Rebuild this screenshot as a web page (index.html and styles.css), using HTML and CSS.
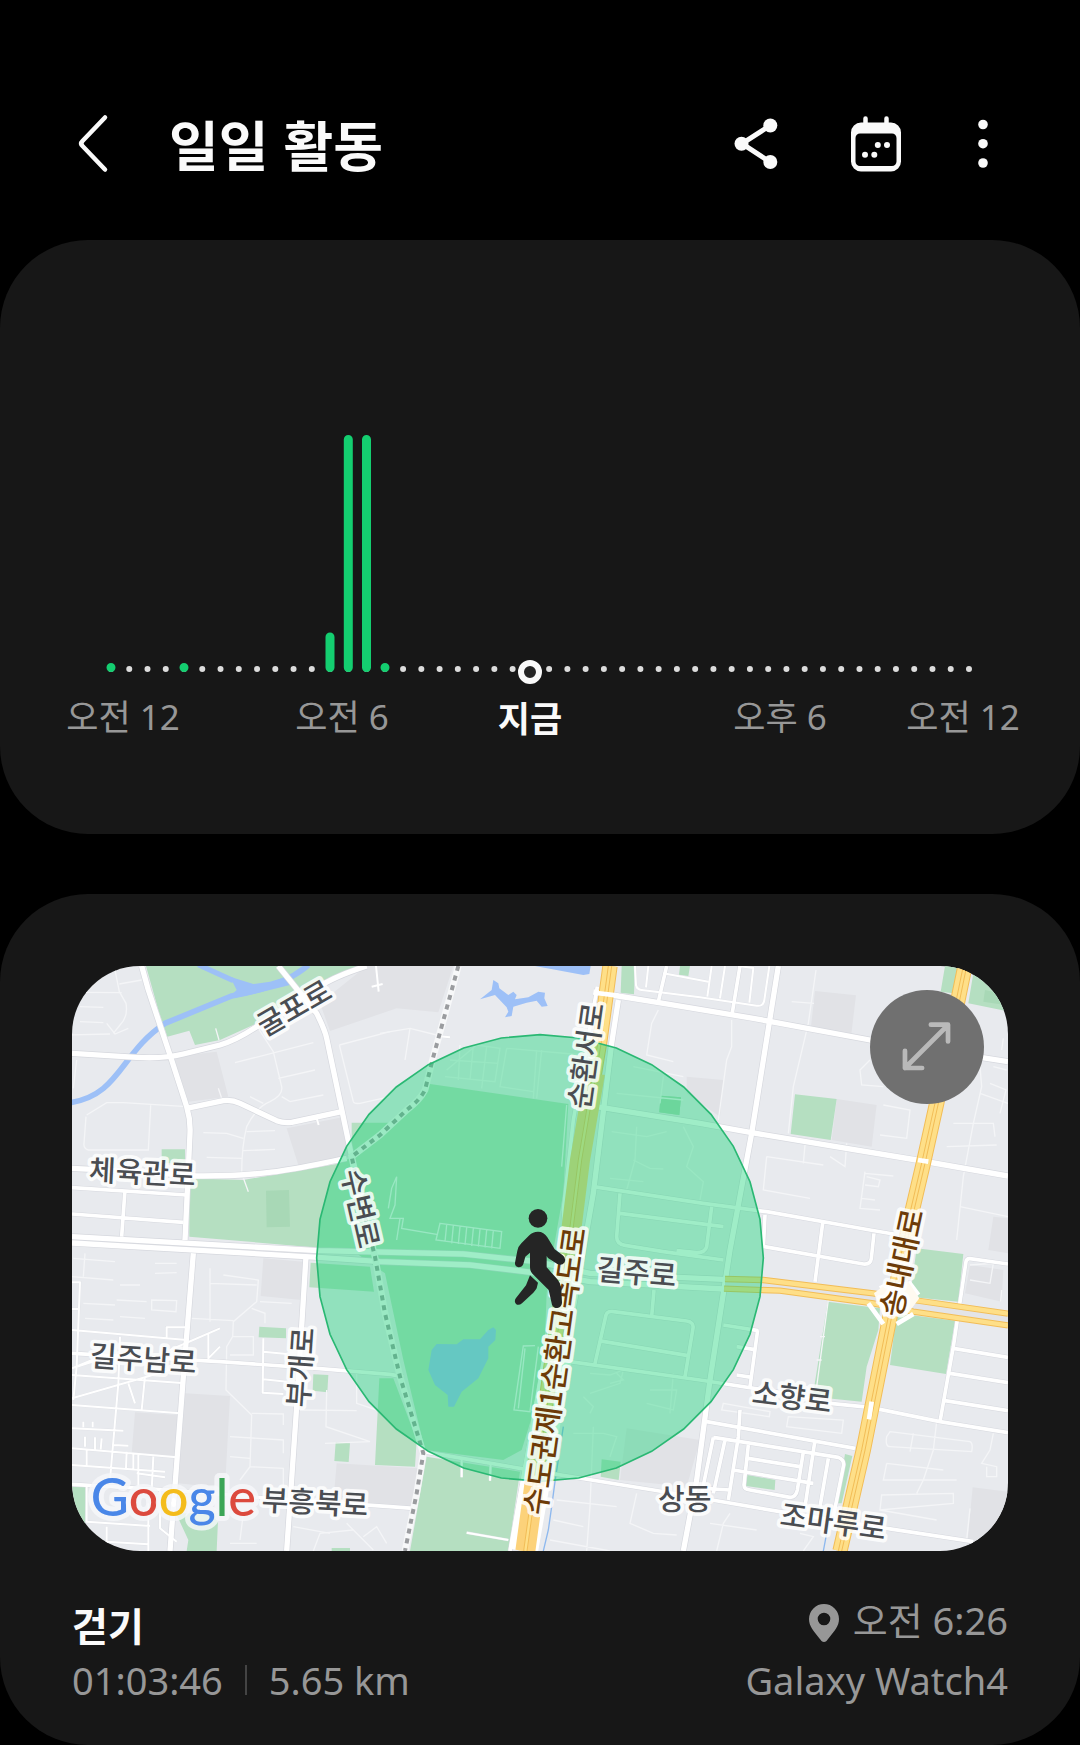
FILE: index.html
```html
<!DOCTYPE html>
<html lang="ko">
<head>
<meta charset="utf-8">
<meta name="viewport" content="width=device-width, initial-scale=1">
<title>일일 활동</title>
<link rel="stylesheet" href="styles.css">
</head>
<body>
<header class="topbar">
  <button class="icon-button" type="button" aria-label="뒤로">
    <svg width="46" height="60" viewBox="70 116 46 60"><path class="line back" d="M105 119.500 82.500 143Q80 145.500 82.500 148L105 171.500"/></svg>
  </button>
  <h1 class="title">일일 활동</h1>
  <div class="actions">
    <button class="icon-button" type="button" aria-label="공유">
      <svg width="60" height="60" viewBox="726 116 60 60"><path class="line share" d="M770 127.500 742 145.700 770 164"/><g class="solid"><circle cx="770.300" cy="127.500" r="7"/><circle cx="741.500" cy="145.700" r="7"/><circle cx="770.300" cy="164" r="7"/></g></svg>
    </button>
    <button class="icon-button" type="button" aria-label="달력">
      <svg width="60" height="60" viewBox="846 116 60 60"><path class="solid" fill-rule="evenodd" d="M861 124.500h30a10 10 0 0 1 10 10v29a10 10 0 0 1-10 10h-30a10 10 0 0 1-10-10v-29a10 10 0 0 1 10-10zM860 135.500a4.500 4.500 0 0 0-4.500 4.500v23.500a4.500 4.500 0 0 0 4.500 4.500h32a4.500 4.500 0 0 0 4.500-4.500v-23.500a4.500 4.500 0 0 0-4.500-4.500z"/><path class="line peg" d="M865.500 120.500v6M886.500 120.500v6"/><g class="solid"><circle cx="865" cy="156.800" r="3"/><circle cx="874.300" cy="156.800" r="3"/><circle cx="877.800" cy="147" r="3"/><circle cx="887" cy="147" r="3"/></g></svg>
    </button>
    <button class="icon-button" type="button" aria-label="더보기">
      <svg width="34" height="60" viewBox="966 116 34 60"><g class="solid"><circle cx="983" cy="126.500" r="4.800"/><circle cx="983" cy="145.700" r="4.800"/><circle cx="983" cy="165" r="4.800"/></g></svg>
    </button>
  </div>
</header>

<main class="content">
  <section class="card chart-card" aria-label="시간대별 활동">
    <svg class="chart" viewBox="0 420 1080 340" role="img" aria-label="시간대별 활동 그래프">
      <path class="ticks" d="M111 669H970"/>
      <g class="bars">
        <path d="M111 667.500v.01M184 667.500v.01M330 637v30.500M348.300 439.500v228M366.500 439.500v228M385 667.500v.01"/>
      </g>
      <circle class="now-dot" cx="530" cy="672" r="9"/>
      <g class="axis">
        <text x="123" y="730">오전 12</text>
        <text x="342" y="730">오전 6</text>
        <text class="now" x="530" y="732">지금</text>
        <text x="780" y="730">오후 6</text>
        <text x="963" y="730">오전 12</text>
      </g>
    </svg>
  </section>

  <section class="card workout">
    <div class="map">
      <svg class="map-art" viewBox="6 18 2808 1755" role="img" aria-label="운동 위치 지도">
        <defs>
          <g id="wide">
            <path d="M215 18 235 90 300 285 350 440Q362 480 360 520L345 840"/>
            <path d="M6 280 200 292Q280 297 340 282L450 255Q500 240 560 200L740 85Q790 50 890 18"/>
            <path d="M625 18 740 160Q765 210 770 235L845 590"/>
            <path d="M350 445 460 422Q485 418 510 430L620 482Q640 490 665 487L815 455"/>
            <path d="M6 625 200 635 380 648C600 650 700 620 830 595"/>
            <path d="M6 830 745 872 1180 882 1400 905 1560 940 1960 958"/>
            <path d="M6 849 230 862 745 892 930 905 1200 915 1450 945 1560 965 1960 987"/>
            <path d="M1570 96 1780 130 2050 175 2400 240 2814 305"/>
            <path d="M1580 440 1890 490 2045 518 2540 600 2814 648"/>
            <path d="M2125 18 2045 520 1980 870 1920 1260 1880 1560 1840 1773"/>
            <path d="M708 890 680 1340 650 1773"/>
            <path d="M370 880 340 1250 300 1773"/>
            <path d="M1645 120 1625 250 1570 700 1500 1100"/>
          </g>
          <g id="mid">
            <path d="M6 1180 450 1205 740 1225 960 1243 1000 1250"/>
            <path d="M6 1573 300 1590 600 1615 960 1640 1030 1645"/>
            <path d="M1060 1475 1350 1525 1750 1590 2130 1655 2450 1705 2710 1745"/>
            <path d="M2010 18 1985 170M1790 18 1765 125M1582 80 1510 480 1480 750 1490 860 1440 1100 1320 1773"/>
            <path d="M1570 680 1900 730 2090 755 2400 810 2470 822M2083 860 2380 912Q2402 914 2404 895L2412 820M2258 790 2235 965M2085 765 2080 865"/>
            <path d="M1650 700 1640 830Q1640 852 1665 856L1780 875 1960 900M1650 760 1960 800M1925 740 1910 860Q1905 878 1880 878L1820 872"/>
            <path d="M1752 990 1745 1070M1575 1210 1608 1065Q1612 1052 1630 1055L1850 1083Q1872 1086 1869 1105L1845 1250M1585 1142 1850 1186M1500 1205 1890 1260 2150 1300 2280 1330 2400 1342 2610 1385 2814 1418"/>
            <path d="M1960 1095 2065 1112M2063 1110 2040 1280M2000 1245 2045 1252M2000 1160 2050 1168"/>
            <path d="M2814 912 2700 896Q2690 895 2688 905L2650 1160 2610 1385M2650 1165 2814 1192M2640 1240 2814 1268M2625 1322 2814 1352"/>
            <path d="M1910 1385 2355 1465M1930 1432 2305 1492Q2325 1500 2320 1520L2290 1670M2010 1350 2005 1430 1975 1620M2035 1455 2022 1575Q2022 1588 2040 1590L2160 1612Q2178 1612 2182 1590L2200 1475M2035 1495 2190 1520M1990 1530 2230 1570M2235 1440 2205 1640M2275 1495 2250 1640M1930 1432 1895 1600M1965 1440 1930 1600M1900 1585 1980 1590"/>
            <path d="M6 683 350 705M6 762 340 787M165 690 155 830"/>
          </g>
          <g id="thin">
            <path d="M1695 18 1698 75Q1700 88 1715 90L1890 112 2060 137Q2080 140 2083 120L2098 18M1780 40 1915 65M1735 18 1728 82M1925 18 1912 110M1965 18 1950 115M2005 18 2050 24 2038 128"/>
            <path d="M918 18 926 95M905 80 938 72M740 475 746 495M1100 228 1140 232"/>
            <path d="M6 967 30 967 20 1220 10 1320M6 1047 25 1047M6 1110 350 1140M6 1225 90 1190M6 1225 100 1195M6 1315 300 1230M290 1135 290 1102 345 1102M300 1170 450 1105M6 1245 345 1270M150 1130 145 1270 120 1560M225 1250 215 1350M6 1335 330 1360M6 1405 160 1412M6 1465 320 1492M6 1515 285 1535M50 1470 50 1520M175 1270 195 1330M170 1475 168 1525M190 1480 190 1530M205 1480 205 1590M250 1490 245 1590M415 1120 415 1195 450 1160M580 1135 578 1298 640 1302M580 1175 650 1182M580 1258 650 1265M45 1430 45 1460M75 1432 75 1468M95 1435 92 1468M130 1455 175 1457M40 1385 40 1402M68 1385 68 1402M50 1580 50 1685 240 1698M110 1700 110 1745 235 1753M270 1590 270 1705 320 1745M235 1630 235 1773M200 1540 285 1552"/>
            <path d="M1190 1718 1315 1740M1175 1500 1175 1552M1262 1510 1260 1562"/>
          </g>
        </defs>
        <rect class="land" x="6" y="18" width="2808" height="1755"/>
        <g class="block">
          <path d="M310 290 440 275 475 410 355 425zM650 505 825 470 845 590 685 615zM750 130 890 18 1150 18 1105 157 980 145 780 213z"/>
          <path d="M580 895 700 905 695 1020 572 1008zM195 1357 325 1365 318 1490 185 1480zM345 1300 480 1308 465 1585 325 1570zM800 1510 1045 1525 1030 1645 790 1625z"/>
          <path d="M2235 93 2358 106 2343 230 2222 208zM2300 417 2420 435 2405 560 2285 540zM1850 350 1960 360 1950 470 1850 400zM2770 770 2814 775 2814 880 2755 870zM1670 1405 1890 1440 1850 1580 1650 1560zM2708 1582 2814 1595 2814 1773 2690 1773zM2700 915 2800 930 2795 1025 2685 1000z"/>
        </g>
        <g class="park">
          <path d="M228 18H890L780 60 740 90 560 190 450 240 375 255 358 212 292 230 265 150z"/>
          <path d="M275 568H345V610H275zM358 655 520 660 800 612 850 590V872L358 830z"/>
          <path d="M845 488H960L1030 440 1075 371 1495 432 1480 700 1450 870 1430 1000 1420 1260 1355 1470 1300 1500 1065 1470 1000 1200 945 940 845 870 740 860 845 590z"/>
          <path d="M722 908 900 920 912 995 718 982zM928 1255H970L1040 1440 1035 1520 915 1515zM1070 1490 1350 1535 1315 1773H1020z"/>
          <path d="M568 1100 648 1105V1135L566 1132zM730 1243 775 1245 772 1297 728 1292zM797 1447 840 1450 836 1506 793 1503zM318 1660H445L440 1773H350L355 1740zM6 1580H50L45 1700 20 1680zM785 1764H840V1773H785z"/>
          <path d="M1655 18H1695L1692 103 1652 98zM1830 18H1860L1855 48 1827 44zM1772 407 1833 412 1828 465 1768 457zM2175 403 2300 417 2282 540 2162 522zM2625 18H2668L2650 100 2612 95zM2710 40 2814 80 2805 152 2695 130z"/>
          <path d="M2540 865 2680 882 2665 1025 2520 1010zM2273 1025 2430 1045 2425 1110 2390 1220 2375 1325 2228 1310zM2480 1060 2655 1082 2628 1242 2460 1215zM2032 1545 2116 1560 2114 1590 2028 1578zM2325 1482 2347 1488 2315 1630H2300zM1595 1498 1652 1505 1646 1560 1592 1550z"/>
        </g>
        <path class="park-dark" d="M588 692 657 690 660 800 590 802zM2745 90 2814 105 2805 135 2740 125zM1772 407 1833 412 1828 465 1768 457z"/>
        <g class="water">
          <path d="M480 50 500 90 470 118 560 100 660 75 650 50 600 65 550 72z"/>
          <path d="M1270 60 1285 70 1288 85 1315 105 1330 95 1340 105 1335 118 1375 112 1405 95 1425 98 1423 115 1433 138 1415 140 1400 122 1370 128 1330 140 1325 168 1305 172 1315 155 1310 142 1275 105 1230 118 1265 90zM1395 18H1562L1558 42 1540 45z"/>
          <path d="M1270 1102 1278 1110 1276 1140 1255 1160V1195L1225 1255 1175 1295 1152 1340H1135L1133 1305 1095 1275 1075 1230 1085 1170 1100 1152 1160 1153 1180 1138 1230 1138 1255 1110z"/>
        </g>
        <path class="river" d="M0 428C150 405 150 280 285 190L485 108Q640 80 715 15"/>
        <path class="river narrow" d="M385 14Q430 35 490 62"/>
        <path class="stream" d="M1480 1400 1455 1565 1445 1640 1435 1710 1420 1773M2270 1720 2260 1773"/>
        <g class="faint">
          <path d="M135 30 148 95 168 130Q175 170 150 195L130 220M40 97 155 98M30 140 100 142M30 185 100 188M110 190 135 222 175 205M148 72 215 60M437 205 447 240M495 308 730 248M565 205 610 275 635 380Q640 405 600 425 560 440 530 500 515 560 515 640L535 695M625 355 735 330M540 410 580 430M635 410 660 425 760 405M400 518 470 520 520 535M530 515 615 512M410 592 515 595M520 572 615 568M50 465 110 428 160 428 350 440M242 436 235 570 55 570Q40 565 42 550L48 470M808 255 960 215M808 255 850 425Q852 432 870 430L960 410M445 385 455 415M20 300 10 385M1 225 120 222"/>
          <path d="M930 220 1020 205 1100 225M1020 205 1005 300M1130 330 1220 255 1290 265 1275 365 1125 350M1170 255 1165 360M1210 258 1200 360M1140 300 1285 310M1250 260 1235 385M1310 265 1290 380 1390 395M1310 265 1540 285M1400 270 1390 415M1415 270 1400 415M1490 435 1475 620M955 745 965 685 980 650 975 735 960 775 1000 775 995 805 1100 823M990 775 980 840M1110 790 1295 815 1290 865 1098 840zM1130 795 1125 845M1150 797 1145 850M1170 800 1165 852M1190 803 1185 855M1210 805 1205 858M1230 808 1225 860M1250 810 1245 862M1270 812 1265 865M1395 1157 1360 1158 1332 1350 1380 1355 1405 1160M1365 1165 1345 1345"/>
          <path d="M1765 150 1745 190 1730 285 1810 305M1690 320 1840 350M1780 350 1770 430M1640 400 1840 420M1700 500 1695 600 1670 690M1625 515 1730 530 1790 515M1620 655 1720 665M1690 600 1740 625 1780 627M1840 500 1870 560 1850 620 1900 665 1890 720M1985 180 1985 260 1970 300 1945 480M2238 30 2215 190 2170 380 2155 520M2165 125 2232 130M2090 590 2080 690 2220 715M2090 590 2260 615M2205 555 2200 610M2330 550 2325 620 2280 590M2385 635 2370 745 2430 750M2385 640 2470 648M2390 650 2430 660 2425 680 2385 675M2375 715 2415 720M2440 435 2520 450 2510 535 2430 525M2400 300 2370 330 2375 375 2440 380M2730 320 2735 380 2710 490 2680 650 2660 840M2650 490 2770 490 2775 530M2630 560 2780 555M2670 740 2814 770M2770 320 2810 330M2760 370 2808 390 2790 460M2730 400 2814 430M2800 235 2795 270"/>
          <path d="M45 880 40 950M6 950 130 960M10 895 135 905M40 1030 135 1035M45 1075 130 1080M150 975 210 975M140 1020 230 1025M150 1070 225 1075M255 910 320 910M255 940 320 938M245 1020 320 1022 318 1055 245 1050zM420 925 420 1085M420 970 560 975M460 945 565 960 560 1025 490 1085 488 1130 470 1160 468 1290 545 1365 540 1520 510 1560M365 1075 490 1082M570 1025 665 1030M545 1045 585 1060 585 1090M490 1130 550 1130V1185H480M480 1430 640 1440V1480M545 1360 640 1362V1395M480 1490 540 1495M540 1520 640 1525V1580M770 1290 768 1400 900 1445M860 1240 860 1330 920 1350M690 1350 860 1352M765 1450 900 1445M520 1660 510 1740M480 1750H560M830 1690 850 1710 750 1720 730 1773M850 1710 910 1770M880 1730 920 1700 950 1750M670 1700 780 1720"/>
          <path d="M1560 1240 1620 1245 1660 1230 1650 1270 1560 1300M1540 1310 1570 1340 1560 1360M1640 1240 1660 1260 1620 1270M1810 1240 1800 1360M1740 1290 1820 1290 1810 1350 1730 1330M1510 1420 1600 1420 1640 1430 1620 1490M1570 1400 1560 1640 1550 1773M1460 1620 1640 1640M1450 1680 1540 1700M1440 1740 1620 1773M1700 1600 1680 1690 1750 1720 1820 1725M1980 1660 1960 1690 1940 1773M1920 1690 2060 1710M2190 1720 2230 1730 2200 1773"/>
          <path d="M2275 1020 2240 1280M2250 1130H2265M2240 1200H2255M1960 1330 2100 1355 2098 1370 1955 1350zM2155 1370 2320 1380 2315 1420 2150 1400zM2460 1415 2700 1445Q2710 1450 2705 1475L2460 1460Q2445 1460 2450 1430zM2530 1420 2520 1475M2600 1385 2590 1470 2560 1560 2540 1600M2450 1510 2620 1530M2450 1510 2440 1560 2660 1560M2435 1605 2650 1600 2650 1630 2430 1650zM2430 1650 2600 1680M2700 1645 2690 1740M2770 1420 2760 1470 2735 1510 2780 1520V1550H2750V1520M2700 915 2770 910 2760 970 2700 960M2795 990 2792 1025"/>
        </g>
        <use class="casing-thin" href="#thin"/><use class="casing-mid" href="#mid"/><use class="casing-wide" href="#wide"/>
        <use class="road-thin" href="#thin"/><use class="road-mid" href="#mid"/><use class="road-wide" href="#wide"/>
        <path class="rail-bed" d="M1165 18 1090 290 1065 390Q1050 420 1010 450L930 525 845 590 880 750 915 890 945 1060 990 1250 1060 1480 1040 1600 1005 1773"/>
        <path class="rail" d="M1165 18 1090 290 1065 390Q1050 420 1010 450L930 525 845 590 880 750 915 890 945 1060 990 1250 1060 1480 1040 1600 1005 1773"/>
        <path class="verge" d="M1460 1200 1360 1773"/>
        <path class="median" d="M1965 973 2130 977 2410 1015 2530 1035 2814 1078"/>
        <g class="hw-edge">
          <path class="main" d="M1620 18 1590 240 1530 600 1500 840 1440 1240 1366 1773"/><path class="main" d="M2685 18 2600 430 2560 610 2520 780 2460 1070 2380 1470 2310 1773"/>
          <path d="M1965 957 2080 960 2410 1000 2530 1020 2814 1061M1962 986 2130 992 2410 1030 2530 1055 2814 1096"/>
        </g>
        <g class="hw">
          <path class="main" d="M1620 18 1590 240 1530 600 1500 840 1440 1240 1366 1773"/><path class="main" d="M2685 18 2600 430 2560 610 2520 780 2460 1070 2380 1470 2310 1773"/>
          <path d="M1965 957 2080 960 2410 1000 2530 1020 2814 1061M1962 986 2130 992 2410 1030 2530 1055 2814 1096"/>
        </g>
        <path class="hw-body" d="M1575 340 1530 600 1500 840M1410 1450 1366 1773"/>
        <g class="hw-line"><path d="M1620 18 1590 240 1530 600 1500 840 1440 1240 1366 1773M2685 18 2600 430 2560 610 2520 780 2460 1070 2380 1470 2310 1773"/></g>
        <g class="hw-gap"><path d="M1620 18 1590 240 1530 600 1500 840 1440 1240 1366 1773M2685 18 2600 430 2560 610 2520 780 2460 1070 2380 1470 2310 1773"/></g>
        <path class="junction" d="M2395 1030 2440 1092M2480 1092 2530 1062M2430 985 2460 970M2515 965 2545 1005M2544 600 2575 605M2405 1325 2397 1378M1580 99 1645 107"/>
        <path class="plaza" d="M2412 1000 2450 970 2515 965 2548 1015 2510 1065 2440 1070z"/>

        <path class="zone" d="M1410 224 1526 234 1639 264 1745 314 1841 381 1923 463 1990 559 2040 665 2070 778 2080 894 2070 1010 2040 1123 1990 1229 1923 1325 1841 1407 1745 1474 1639 1524 1526 1554 1410 1564 1294 1554 1181 1524 1075 1474 979 1407 897 1325 830 1229 780 1123 750 1010 740 894 750 778 780 665 830 559 897 463 979 381 1075 314 1181 264 1294 234z"/>

        <g class="labels">
          <text transform="translate(217 637) rotate(3)" dy="32">체육관로</text>
          <text transform="translate(672 143) rotate(-30)" dy="32">굴포로</text>
          <text transform="translate(872 745) rotate(77)" dy="32">수변로</text>
          <text transform="translate(1548 287) rotate(-82)" dy="32">순환서로</text>
          <text transform="translate(1700 937) rotate(5)" dy="32">길주로</text>
          <text transform="translate(220 1197) rotate(4)" dy="32">길주남로</text>
          <text transform="translate(692 1222) rotate(-86)" dy="32">부개로</text>
          <text transform="translate(735 1627) rotate(3)" dy="32">부흥북로</text>
          <text transform="translate(1844 1618)" dy="32">상동</text>
          <text transform="translate(2166 1311) rotate(7)" dy="32">소향로</text>
          <text transform="translate(2290 1685) rotate(8)" dy="32">조마루로</text>
          <text class="highway" transform="translate(1455 1233) rotate(-82)" dy="32">수도권제1순환고속도로</text>
          <text class="highway" transform="translate(2496 908) rotate(-78)" dy="32">송내대로</text>
        </g>
        <text class="brand" x="62" y="1667"><tspan class="b">G</tspan><tspan class="r">o</tspan><tspan class="y">o</tspan><tspan class="b">g</tspan><tspan class="g">l</tspan><tspan class="r">e</tspan></text>

        <g class="walker">
          <circle cx="1404" cy="775" r="28"/>
          <path d="M1404 815Q1422 815 1432 832L1454 868 1478 886Q1490 895 1483 908 1475 918 1462 912L1434 894 1430 888V922L1462 958Q1472 970 1474 984L1476 1028Q1474 1042 1462 1044 1450 1044 1446 1034L1436 990 1388 942Q1380 934 1380 922V878L1366 890 1360 912Q1356 922 1346 922 1334 920 1335 908L1342 872Q1344 860 1354 850L1378 826Q1388 815 1404 815z"/>
          <path d="M1380 946 1404 968 1400 985Q1396 992 1390 998L1356 1030Q1346 1038 1338 1032 1331 1024 1338 1014L1368 976z"/>
        </g>
      </svg>
      <button class="expand" type="button" aria-label="지도 확대">
        <svg viewBox="0 0 339 339"><path d="M104 232 232 104M181 103H232V153M104 181V232H155"/></svg>
      </button>
    </div>

    <div class="summary">
      <div class="column">
        <h2 class="name">걷기</h2>
        <p class="stats"><span>01:03:46</span><span class="divider"></span><span>5.65 km</span></p>
      </div>
      <div class="column source">
        <p class="when"><svg width="30" height="38" viewBox="0 0 30 38"><path fill-rule="evenodd" d="M15 0a15 15 0 0 1 15 15c0 7-4 11.500-12.500 22q-2.500 2-5 0C4 26.500 0 22 0 15A15 15 0 0 1 15 0zM15 8.700a6.300 6.300 0 1 0 0 12.600 6.300 6.300 0 0 0 0-12.600z"/></svg><span>오전 6:26</span></p>
        <p>Galaxy Watch4</p>
      </div>
    </div>
  </section>
</main>
</body>
</html>
```
FILE: styles.css
```css
* { box-sizing: border-box; }

body {
  margin: 0;
  background: #000;
  color: #979797;
  font-family: "Noto Sans", "Noto Sans CJK KR", sans-serif;
  font-weight: 400;
}

h1, h2, p { margin: 0; }
svg { display: block; }

/* Header */
.topbar {
  display: flex;
  align-items: center;
  gap: 53px;
  padding: 100px 80px 52px 70px;
}
.icon-button {
  padding: 0;
  border: 0;
  background: none;
  cursor: pointer;
}
.title {
  color: #fafafa;
  font: 700 54px/88px "Noto Sans CJK KR", sans-serif;
}
.actions {
  display: flex;
  gap: 60px;
  margin-left: auto;
}
.solid { fill: #fafafa; }
.line { fill: none; stroke: #fafafa; stroke-linecap: round; stroke-linejoin: round; }
.back { stroke-width: 4.5; }
.share { stroke-width: 5; }
.peg { stroke-width: 4.5; }

/* Cards */
.content { display: grid; gap: 60px; }
.card {
  border-radius: 88px;
  background: #171717;
  overflow: hidden;
}
.chart-card { padding: 180px 0 74px; }

/* Activity chart */
.chart { width: 100%; }
.ticks {
  fill: none;
  stroke: #dcdcdc;
  stroke-width: 6;
  stroke-linecap: round;
  stroke-dasharray: 0 18.255;
}
.bars {
  fill: none;
  stroke: #14ce70;
  stroke-width: 9;
  stroke-linecap: round;
}
.now-dot { fill: #252525; stroke: #fafafa; stroke-width: 6; }
.axis {
  fill: #979797;
  font-size: 35px;
  text-anchor: middle;
}
.now { fill: #fafafa; font-weight: 700; }

/* Map */
.workout { padding: 72px 72px 37px; }
.map {
  position: relative;
  border-radius: 68px;
  overflow: hidden;
}
.map-art { width: 100%; }
.land { fill: #e8eaee; }
.block { fill: #e1e2e6; }
.park { fill: #b5dfc1; }
.park-dark { fill: #a8d8b6; }
.water { fill: #9dc0f7; }
.river, .stream, .faint, .rail, .rail-bed, .verge, .median,
.hw, .hw-edge, .hw-body, .hw-line, .hw-gap, .junction { fill: none; }
.river { stroke: #9dc0f7; stroke-width: 17; }
.narrow { stroke-width: 16; }
.stream { stroke: #8db8ee; stroke-width: 4; }
.faint { stroke: #f4f5f7; stroke-width: 4; }
.casing-thin, .casing-mid, .casing-wide { fill: none; stroke: #d6d8de; }
.casing-thin { stroke-width: 8; stroke: #e0e2e7; }
.casing-mid { stroke-width: 14; }
.casing-wide { stroke-width: 20; }
.road-thin, .road-mid, .road-wide { fill: none; stroke: #fff; stroke-linejoin: round; }
.road-thin { stroke-width: 6; }
.road-mid { stroke-width: 11; }
.road-wide { stroke-width: 16; }
.rail-bed { stroke: #f7f8f9; stroke-width: 20; }
.rail { stroke: #9a9c9f; stroke-width: 12; stroke-dasharray: 15 15; }
.verge { stroke: #fff; stroke-width: 88; }
.median { stroke: #e3e4e7; stroke-width: 22; }
.hw-edge { stroke: #f2bd57; stroke-width: 19; }
.hw { stroke: #fedf88; stroke-width: 13; }
.hw-edge .main { stroke-width: 46; }
.hw .main { stroke-width: 40; }
.hw-body { stroke: #fcd27a; stroke-width: 60; }
.hw-line { stroke: #f2bd57; stroke-width: 13; }
.hw-gap { stroke: #fedf88; stroke-width: 7; }
.junction { stroke: #fff; stroke-width: 14; }
.plaza { fill: #fffaf0; }
.zone {
  fill: rgba(22, 212, 120, 0.41);
  stroke: #2ab873;
  stroke-width: 5;
}
.labels {
  fill: #4a4d52;
  stroke: rgba(255, 255, 255, 0.84);
  stroke-width: 22;
  stroke-linejoin: round;
  paint-order: stroke;
  font: 500 87px "Noto Sans CJK KR", sans-serif;
  text-anchor: middle;
}
.highway { fill: #6d3b08; font-size: 89px; }
.brand {
  font: 500 157px Lato, sans-serif;
  stroke: rgba(246, 248, 250, 0.8);
  stroke-width: 30;
  stroke-linejoin: round;
  paint-order: stroke;
}
.b { fill: #4a87e8; }
.r { fill: #dc4a3e; }
.y { fill: #f4bc1c; }
.g { fill: #3ba556; }
.walker { fill: #252525; }
.expand {
  position: absolute;
  top: 24px;
  right: 24px;
  width: 114px;
  height: 114px;
  padding: 0;
  border: 0;
  border-radius: 50%;
  background: #707070;
  cursor: pointer;
}
.expand path {
  fill: none;
  stroke: #b9b9b9;
  stroke-width: 14;
  stroke-linecap: round;
  stroke-linejoin: round;
}

/* Workout summary */
.summary {
  display: flex;
  align-items: flex-end;
  justify-content: space-between;
  padding-top: 41px;
  font-size: 38px;
  line-height: 56px;
}
.column {
  display: flex;
  flex-direction: column;
}
.source {
  align-items: flex-end;
  gap: 4px;
}
.name {
  color: #fafafa;
  font: 700 39px/56px "Noto Sans CJK KR", sans-serif;
}
.when {
  display: flex;
  align-items: center;
  gap: 14px;
  height: 56px;
}
.when svg { fill: #979797; margin-top: 6px; }
.stats {
  display: flex;
  align-items: center;
  gap: 22px;
}
.divider {
  width: 2px;
  height: 30px;
  background: #444;
}
```
